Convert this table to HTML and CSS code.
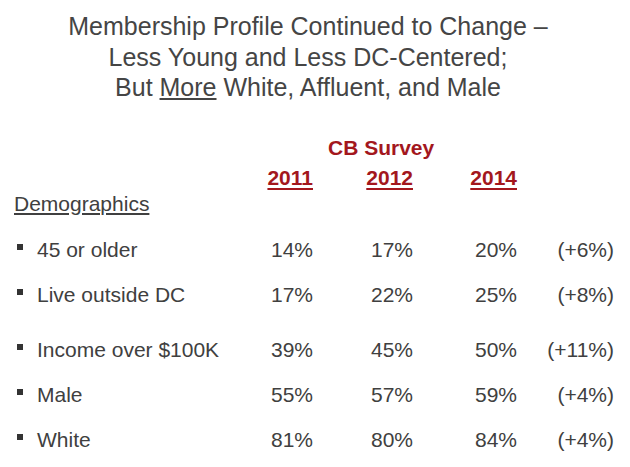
FILE: index.html
```html
<!DOCTYPE html>
<html>
<head>
<meta charset="utf-8">
<link rel="stylesheet" href="styles.css">
</head>
<body>
<div class="slide">
  <h1 class="title">Membership Profile Continued to Change –<br>Less Young and Less DC-Centered;<br>But <u>More</u> White, Affluent, and Male</h1>
  <div class="table">
    <div class="survey">CB Survey</div>
    <div class="row years">
      <span></span><span class="year">2011</span><span class="year">2012</span><span class="year">2014</span><span></span>
    </div>
    <div class="heading">Demographics</div>
    <div class="row data first">
      <span class="label"><i class="bullet"></i>45 or older</span><span>14%</span><span>17%</span><span>20%</span><span>(+6%)</span>
    </div>
    <div class="row data">
      <span class="label"><i class="bullet"></i>Live outside DC</span><span>17%</span><span>22%</span><span>25%</span><span>(+8%)</span>
    </div>
    <div class="row data group">
      <span class="label"><i class="bullet"></i>Income over $100K</span><span>39%</span><span>45%</span><span>50%</span><span>(+11%)</span>
    </div>
    <div class="row data">
      <span class="label"><i class="bullet"></i>Male</span><span>55%</span><span>57%</span><span>59%</span><span>(+4%)</span>
    </div>
    <div class="row data">
      <span class="label"><i class="bullet"></i>White</span><span>81%</span><span>80%</span><span>84%</span><span>(+4%)</span>
    </div>
  </div>
</div>
</body>
</html>
```

FILE: styles.css
```css
html, body {
  margin: 0;
  padding: 0;
  background: #ffffff;
}

.slide {
  width: 630px;
  height: 467px;
  overflow: hidden;
  font-family: "Liberation Sans", Arial, sans-serif;
  color: #404040;
}

.title {
  margin: 0;
  padding: 11px 14px 0 0;
  font-size: 25px;
  font-weight: normal;
  line-height: 30.5px;
  text-align: center;
  color: #454545;
}

.title u {
  text-decoration-thickness: 1.5px;
  text-underline-offset: 2px;
}

.table {
  display: flex;
  flex-direction: column;
  margin-top: 33px;
  font-size: 21px;
  line-height: 24px;
}

.survey {
  padding-left: 328px;
  font-weight: bold;
  color: #a3171d;
}

.row {
  display: grid;
  grid-template-columns: 263px 50px 100px 104px 97px;
}

.row > span {
  text-align: right;
  white-space: nowrap;
}

.row > span.label {
  text-align: left;
}

.years {
  margin-top: 6px;
}

.year {
  font-weight: bold;
  color: #a3171d;
  text-decoration: underline;
  text-decoration-thickness: 2px;
  text-underline-offset: 3px;
}

.heading {
  margin-top: 2px;
  padding-left: 14px;
  text-decoration: underline;
  text-decoration-thickness: 1.5px;
  text-underline-offset: 2px;
}

.data {
  margin-top: 21px;
}

.data.first {
  margin-top: 22px;
}

.data.group {
  margin-top: 31px;
}

.bullet {
  display: inline-block;
  width: 6px;
  height: 6px;
  background: #333333;
  margin-left: 17px;
  margin-right: 14px;
  vertical-align: 7px;
}
```
